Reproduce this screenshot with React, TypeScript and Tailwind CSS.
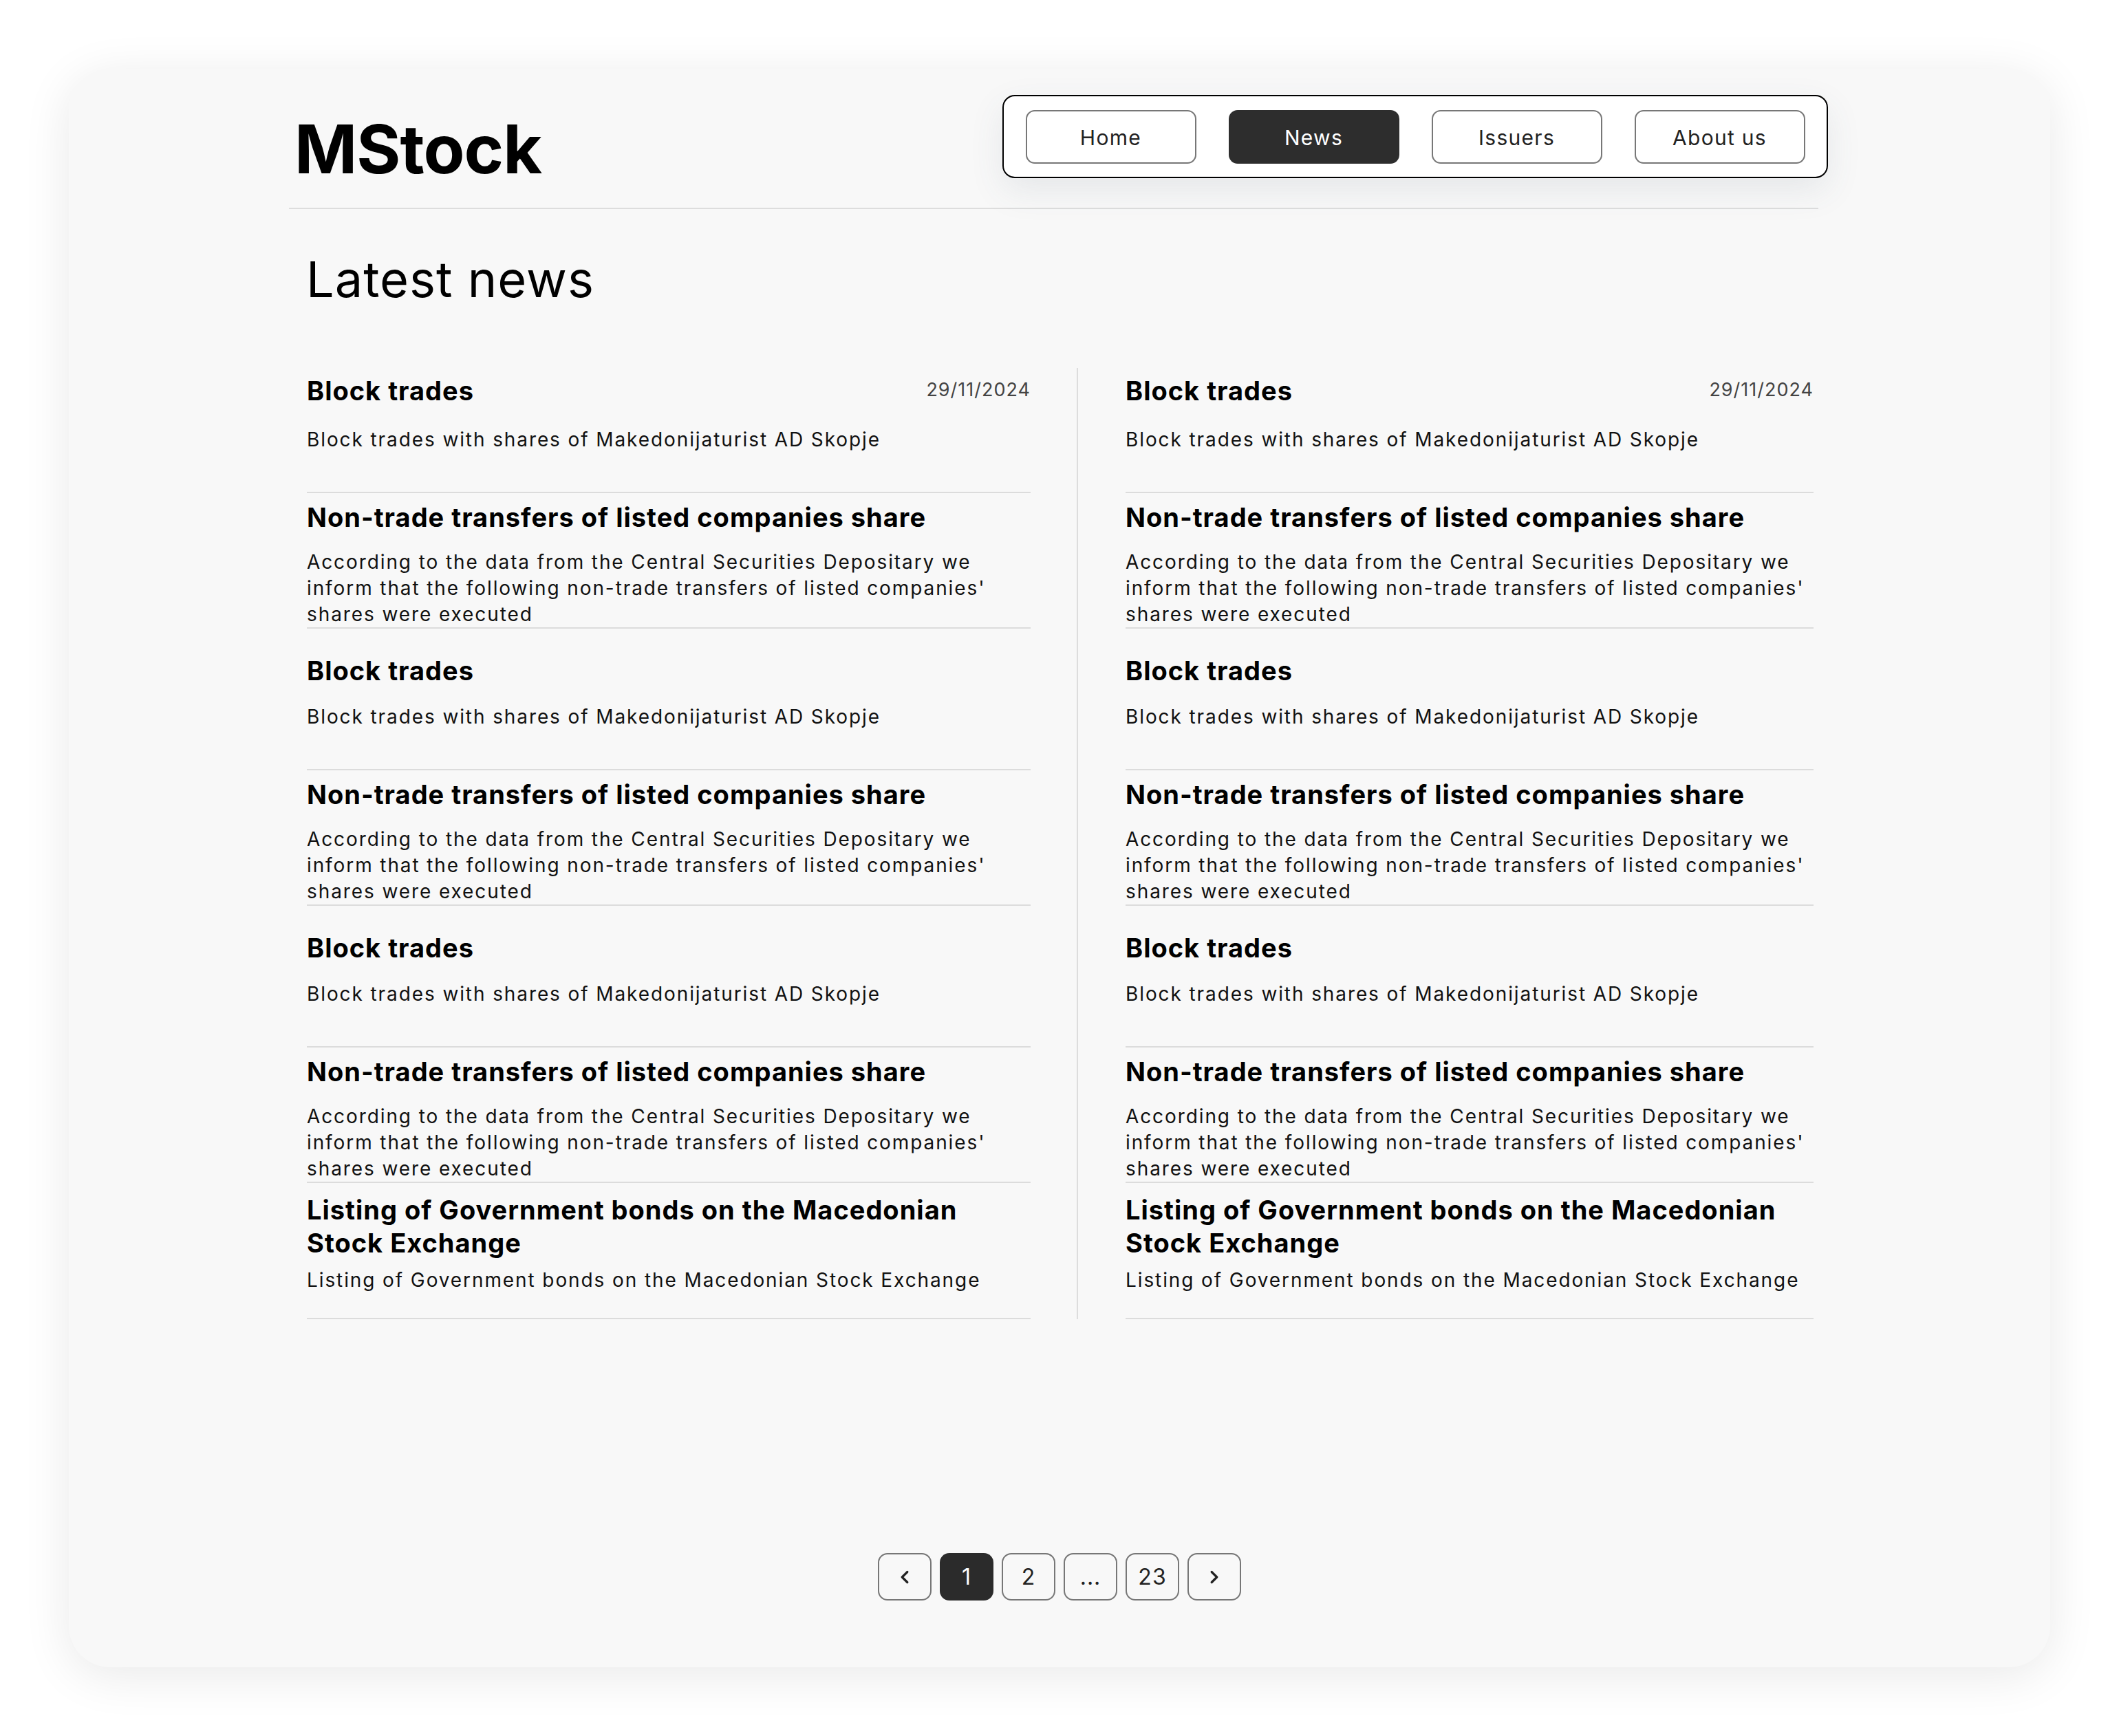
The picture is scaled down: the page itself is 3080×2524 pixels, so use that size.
import { ChevronLeft, ChevronRight } from "lucide-react"

type NewsItem = {
    kind: "block" | "transfer" | "listing"
    title: string
    desc: string[]
    date?: string
    first?: boolean
}

const column: NewsItem[] = [
    { kind: "block", title: "Block trades", desc: ["Block trades with shares of Makedonijaturist AD Skopje"], date: "29/11/2024", first: true },
    {
        kind: "transfer",
        title: "Non-trade transfers of listed companies share",
        desc: [
            "According to the data from the Central Securities Depositary we",
            "inform that the following non-trade transfers of listed companies'",
            "shares were executed",
        ],
    },
    { kind: "block", title: "Block trades", desc: ["Block trades with shares of Makedonijaturist AD Skopje"] },
    {
        kind: "transfer",
        title: "Non-trade transfers of listed companies share",
        desc: [
            "According to the data from the Central Securities Depositary we",
            "inform that the following non-trade transfers of listed companies'",
            "shares were executed",
        ],
    },
    { kind: "block", title: "Block trades", desc: ["Block trades with shares of Makedonijaturist AD Skopje"] },
    {
        kind: "transfer",
        title: "Non-trade transfers of listed companies share",
        desc: [
            "According to the data from the Central Securities Depositary we",
            "inform that the following non-trade transfers of listed companies'",
            "shares were executed",
        ],
    },
    {
        kind: "listing",
        title: "Listing of Government bonds on the Macedonian Stock Exchange",
        desc: ["Listing of Government bonds on the Macedonian Stock Exchange"],
    },
]

const navItems = ["Home", "News", "Issuers", "About us"]

function NewsRow({ item }: { item: NewsItem }) {
    let pad = "pt-[38px] pb-[57px]"
    let gap = "mt-[25px]"
    if (item.first) {
        pad = "pt-[10px] pb-[57px]"
        gap = "mt-[29px]"
    } else if (item.kind === "transfer") {
        pad = "pt-[12px] pb-0"
        gap = "mt-[23px]"
    } else if (item.kind === "listing") {
        pad = "pt-[15px] pb-[36px]"
        gap = "mt-[11px]"
    }

    return (
        <div className={`border-b-2 border-[#dcdcdc] ${pad}`}>
            <div className="flex items-start justify-between">
                <h3 className={`text-[38px] font-bold tracking-[1px] text-black ${item.kind === "listing" ? "max-w-[990px] leading-[48px]" : "leading-[46px]"}`}>
                    {item.title}
                </h3>
                {item.date && (
                    <span className="mt-[6px] shrink-0 text-[27px] leading-[32px] tracking-[1px] text-[#444444]">{item.date}</span>
                )}
            </div>
            <p className={`${gap} text-[28px] leading-[38px] tracking-[1.9px] text-[#111111]`}>
                {item.desc.map((line, i) => (
                    <span key={i} className="block whitespace-nowrap">{line}</span>
                ))}
            </p>
        </div>
    )
}

function PageButton({ children, active }: { children: React.ReactNode; active?: boolean }) {
    return (
        <button
            className={`flex h-[69px] w-[78px] items-center justify-center rounded-[14px] text-[32px] tracking-[1px] ${
                active ? "bg-[#2b2b2b] text-white" : "border-2 border-[#777777] text-[#222222]"
            }`}
        >
            {children}
        </button>
    )
}

function App() {
    return (
        <div className="min-h-screen bg-white p-[100px] font-['Inter',sans-serif]">
            <div className="flex h-[2324px] flex-col rounded-[60px] bg-[#f8f8f8] shadow-[0_12px_70px_rgba(0,0,0,0.09)]">
                <header className="ml-[320px] flex h-[204px] w-[2223px] items-start justify-between border-b-2 border-[#dddddd]">
                    <h1 className="ml-[8px] mt-[68px] text-[98px] font-bold leading-[98px] tracking-[-1px] text-black">MStock</h1>
                    <nav className="-mr-[14px] mt-[38px] flex h-[121px] w-[1200px] items-center justify-center gap-[47px] rounded-[18px] border-2 border-black bg-white shadow-[0_18px_50px_rgba(71,85,105,0.10)]">
                        {navItems.map(n => (
                            <button
                                key={n}
                                className={`h-[78px] w-[248px] rounded-[13px] pt-[3px] text-[30px] tracking-[1.3px] ${
                                    n === "News" ? "bg-[#2d2d2d] text-white" : "border-2 border-[#777777] text-[#222222]"
                                }`}
                            >
                                {n}
                            </button>
                        ))}
                    </nav>
                </header>

                <h2 className="ml-[345px] mt-[58px] text-[72px] font-normal leading-[87px] tracking-[1px] text-black">Latest news</h2>

                <div className="ml-[346px] mt-[86px] flex">
                    <div className="w-[1052px]">
                        {column.map((item, i) => (
                            <NewsRow key={i} item={item} />
                        ))}
                    </div>
                    <div className="ml-[67px] w-[2px] self-stretch bg-[#dddddd]" />
                    <div className="ml-[69px] w-[1000px]">
                        {column.map((item, i) => (
                            <NewsRow key={i} item={item} />
                        ))}
                    </div>
                </div>

                <div className="mb-[97px] mt-auto flex justify-center gap-[12px]">
                    <PageButton>
                        <ChevronLeft size={30} strokeWidth={2.6} className="text-[#222222]" />
                    </PageButton>
                    <PageButton active>1</PageButton>
                    <PageButton>2</PageButton>
                    <PageButton>...</PageButton>
                    <PageButton>23</PageButton>
                    <PageButton>
                        <ChevronRight size={30} strokeWidth={2.6} className="text-[#222222]" />
                    </PageButton>
                </div>
            </div>
        </div>
    )
}

export default App
